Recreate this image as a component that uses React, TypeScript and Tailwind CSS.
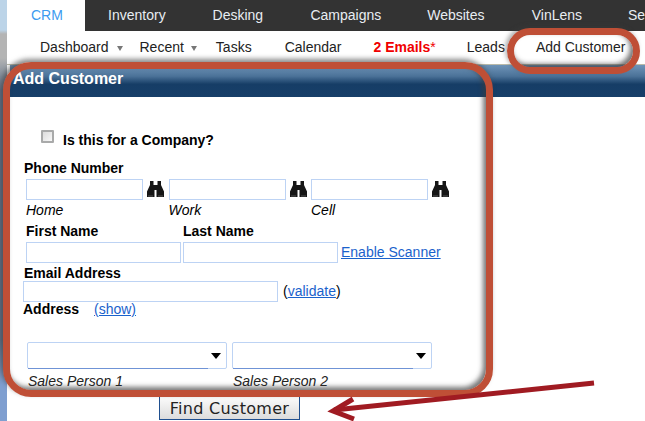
const font = "font-['Liberation_Sans',Arial,sans-serif]";

const topTabs = [
  { label: "Inventory", width: "w-[102px]" },
  { label: "Desking", width: "w-[100px]" },
  { label: "Campaigns", width: "w-[116px]" },
  { label: "Websites", width: "w-[104px]" },
  { label: "VinLens", width: "w-[98px]" },
];

function Caret({ gap }: { gap: string }) {
  return <span className={`mt-[2px] h-0 w-0 border-x-[3.5px] border-t-[5px] border-x-transparent border-t-[#777] ${gap}`} />;
}

function Binoculars() {
  return (
    <svg className="ml-[3px] shrink-0" width="19" height="17" viewBox="0 0 19 17" fill="#161616">
      <path d="M4 0h3.5v4h4V0H15v4l3 6.5V16h-7.5V9h-2v7H1v-5.5L4 4z" />
      <path d="M2 15h5M12 15h5" stroke="#555" strokeWidth="1" />
    </svg>
  );
}

function TextInput({ width }: { width: string }) {
  return <div className={`h-[21px] shrink-0 border border-[#bdd3f4] bg-white ${width}`} />;
}

function PhoneField({ label }: { label: string }) {
  return (
    <div className="flex w-[142.5px] flex-col">
      <div className="flex items-center">
        <TextInput width="w-[117px]" />
        <Binoculars />
      </div>
      <span className="mt-[2px] text-[14px] leading-[17px] italic">{label}</span>
    </div>
  );
}

function SalesSelect({ label }: { label: string }) {
  return (
    <div className="flex w-[205px] flex-col">
      <div className="relative flex h-[27px] w-[200px] items-center justify-end rounded-[2px] border border-[#bdd3f4] bg-white pr-[5px]">
        <span className="h-0 w-0 border-x-[5px] border-t-[6px] border-x-transparent border-t-black" />
        <span className="absolute bottom-[-1px] left-0 h-px w-[180px] bg-[#6f93d6]" />
      </div>
      <span className="mt-[4px] pl-px text-[14px] leading-[17px] italic text-[#222]">{label}</span>
    </div>
  );
}

export default function App() {
  return (
    <div className={`relative flex h-[421px] w-[645px] overflow-hidden bg-white text-black ${font}`}>
      <div className="w-[7px] shrink-0 bg-[linear-gradient(#bcd4e8_0,#bcd4e8_30px,#b4b4b4_34px,#b4b4b4_58px,#5d7088_90px,#5d7088_340px,#7f9fd0_385px)]" />
      <div className="flex min-w-0 flex-1 flex-col">
        <nav className="flex h-[31px] shrink-0 items-center bg-[#333] text-[14px] text-[#e8edf2]">
          <div className="flex h-full w-[79px] items-center justify-center bg-white pl-[2px] text-[#3d9bf0]">CRM</div>
          <div className="ml-px flex items-center">
            {topTabs.map((t) => (
              <div key={t.label} className={`shrink-0 text-center ${t.width}`}>
                {t.label}
              </div>
            ))}
          </div>
          <span className="ml-[22px] shrink-0">Se</span>
        </nav>

        <div className="flex h-[34px] shrink-0 items-center whitespace-nowrap border-b border-[#b9b9a8] pb-[1px] pl-[33px] text-[14px] text-[#222]">
          <span>Dashboard</span>
          <Caret gap="ml-[8px]" />
          <span className="ml-[17px]">Recent</span>
          <Caret gap="ml-[7px]" />
          <span className="ml-[19px]">Tasks</span>
          <span className="ml-[33px]">Calendar</span>
          <span className="ml-[32px] font-bold text-[#f00000]">
            2 Emails<span className="font-normal">*</span>
          </span>
          <span className="ml-[31px]">Leads</span>
          <span className="ml-[31px]">Add Customer</span>
        </div>

        <div className="ml-[3px] h-[32px] shrink-0 bg-[linear-gradient(#6f94b8_0%,#4b7298_35%,#163d66_60%,#173f69_100%)] pl-[3px] pt-[5px] text-[16px] leading-[18px] font-bold text-white">
          Add Customer
        </div>

        <form className="flex flex-1 flex-col pl-[16px] text-[14px]">
          <label className="mt-[33px] flex h-[18px] items-start pl-[18px] font-bold leading-[16px]">
            <span className="h-[13px] w-[13px] rounded-[1px] border-2 border-[#a9aaaa] bg-gradient-to-br from-[#dcdcdc] to-[#f8f8f8]" />
            <span className="ml-[9px] mt-[2px]">Is this for a Company?</span>
          </label>

          <div className="mt-[12px] pl-px font-bold leading-[16px]">Phone Number</div>
          <div className="mt-[3px] flex pl-[3px]">
            <PhoneField label="Home" />
            <PhoneField label="Work" />
            <PhoneField label="Cell" />
          </div>

          <div className="mt-[4px] flex pl-[3px] font-bold leading-[16px]">
            <span className="w-[157px]">First Name</span>
            <span>Last Name</span>
          </div>
          <div className="mt-[3px] flex items-center pl-[3px]">
            <TextInput width="w-[155px]" />
            <div className="ml-[2px]">
              <TextInput width="w-[155px]" />
            </div>
            <a className="ml-[3px] text-[#1a62cc] underline">Enable Scanner</a>
          </div>

          <div className="mt-[2px] pl-px font-bold leading-[16px]">Email Address</div>
          <div className="flex items-center">
            <TextInput width="w-[255px]" />
            <span className="ml-[5px]">
              (<a className="text-[#1a62cc] underline">validate</a>)
            </span>
          </div>

          <div className="mt-[-1px] flex items-center leading-[16px]">
            <span className="w-[71px] font-bold">Address</span>
            <a className="text-[#1a62cc] underline">(show)</a>
          </div>

          <div className="mt-[25px] flex pl-[4px]">
            <SalesSelect label="Sales Person 1" />
            <SalesSelect label="Sales Person 2" />
          </div>

          <button
            type="button"
            className="mt-[6px] ml-[136px] h-[24px] w-[141px] border border-[#1f4f8f] bg-gradient-to-b from-[#fbfbfb] to-[#dcdcdc] text-center font-['DejaVu_Sans',sans-serif] text-[16px] leading-[24px] tracking-[0.3px] text-[#222]"
          >
            Find Customer
          </button>
        </form>
      </div>

      {/* hand drawn callouts over the page */}
      <div className="pointer-events-none absolute left-[3px] top-[62px] h-[335px] w-[490px] rounded-[28px] border-[7px] border-[#bf4f36] shadow-[-2px_-3px_5px_rgba(60,60,60,0.6),inset_-3px_-3px_5px_rgba(60,60,60,0.7)]" />
      <div className="pointer-events-none absolute left-[507px] top-[28px] h-[46px] w-[133px] rounded-[23px] border-[7px] border-[#bf4f36] shadow-[-2px_-2px_4px_rgba(60,60,60,0.4),inset_-3px_-3px_5px_rgba(60,60,60,0.7)]" />
      <svg className="pointer-events-none absolute left-0 top-0" width="645" height="421" fill="none">
        <path d="M594 383L334 410" stroke="#a01b22" strokeWidth="5" />
        <path d="M353 399L333 411L354 419" stroke="#a01b22" strokeWidth="5" />
      </svg>
    </div>
  );
}
